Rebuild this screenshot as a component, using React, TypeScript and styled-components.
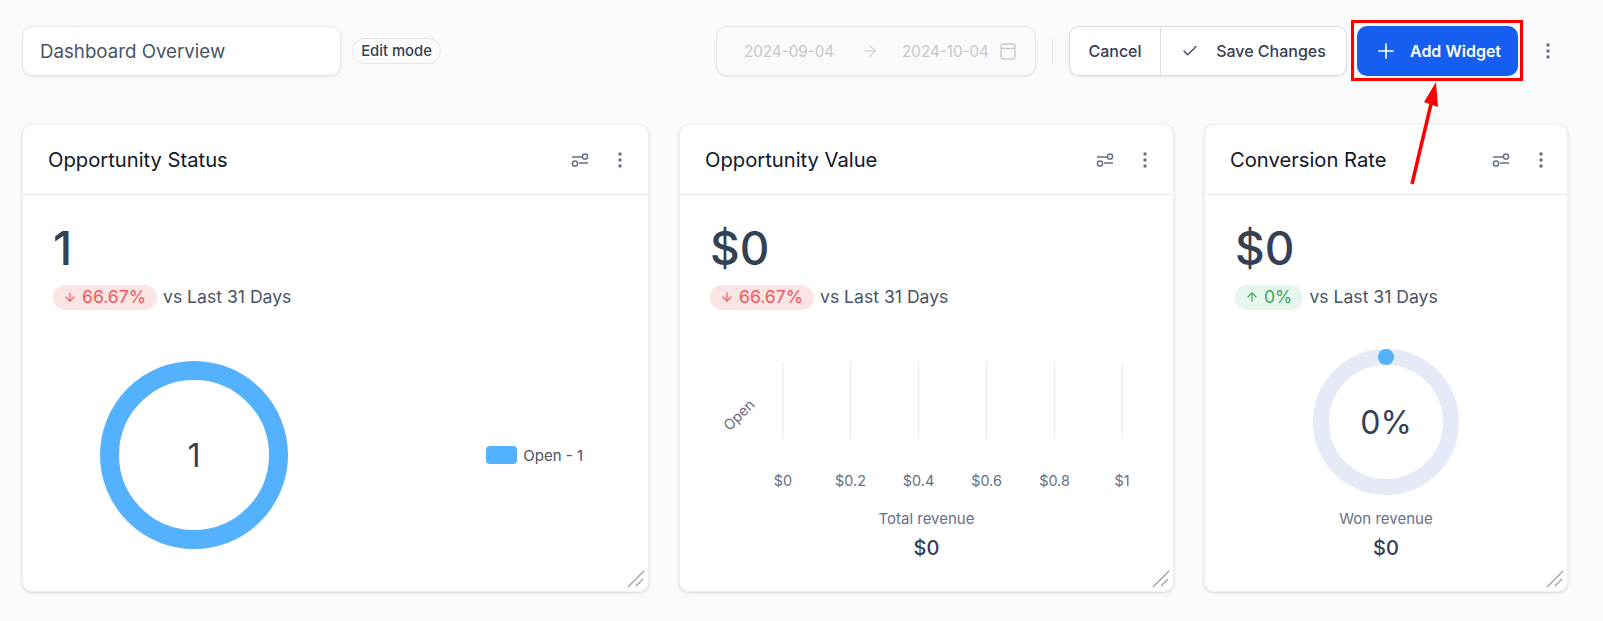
import React from 'react';
import styled, { createGlobalStyle } from 'styled-components';
import { ArrowDown, ArrowRight, ArrowUp, Check, Plus } from 'lucide-react';

const GlobalStyle = createGlobalStyle`
  html, body {
    margin: 0;
    background: #f9fafc;
    font-family: Inter, "Liberation Sans", sans-serif;
    overflow: hidden;
  }
  * { box-sizing: border-box; }
`;

const Page = styled.div`
  position: relative;
  width: 1603px;
  height: 621px;
  padding: 26px 35px 0 22px;
  background: #f9fafc;
`;

const Toolbar = styled.div`
  display: flex;
  align-items: center;
  height: 50px;
  margin-bottom: 48px;
`;

const TitleInput = styled.div`
  width: 319px;
  height: 50px;
  padding: 0 17px;
  display: flex;
  align-items: center;
  background: #fff;
  border: 1px solid #e4e7ec;
  border-radius: 10px;
  box-shadow: 0 1px 2px rgba(16, 24, 40, 0.08);
  font-size: 18.7px;
  color: #475467;
`;

const ModePill = styled.div`
  margin-left: 11px;
  height: 26px;
  width: 89px;
  display: flex;
  align-items: center;
  justify-content: center;
  background: #fcfcfd;
  border: 1px solid #e4e7ec;
  border-radius: 13px;
  font-size: 14.8px;
  font-weight: 500;
  color: #344054;
`;

const DateRange = styled.div`
  margin-left: auto;
  width: 320px;
  height: 50px;
  padding: 0 0 0 27px;
  display: flex;
  align-items: center;
  background: #f9fafb;
  border: 1px solid #e4e7ec;
  border-radius: 10px;
  box-shadow: 0 1px 2px rgba(16, 24, 40, 0.06);
  font-size: 15.2px;
  color: #c6c8cd;
`;

const DateArrow = styled.span`
  display: flex;
  margin: 0 23px 0 27px;
`;

const DateIcon = styled.span`
  display: flex;
  margin-left: 11px;
`;

const Separator = styled.div`
  width: 1px;
  height: 28px;
  margin: 0 16px;
  background: #e9ebef;
`;

const ButtonGroup = styled.div`
  display: flex;
  width: 278px;
  height: 50px;
  background: #fff;
  border: 1px solid #d9dde3;
  border-radius: 10px;
  box-shadow: 0 1px 2px rgba(16, 24, 40, 0.08);
  font-size: 16px;
  font-weight: 500;
  color: #344054;
`;

const GroupButton = styled.div<{ $width: number; $divider?: boolean }>`
  width: ${(p) => p.$width}px;
  display: flex;
  align-items: center;
  justify-content: center;
  gap: 17px;
  border-left: ${(p) => (p.$divider ? '1px solid #d9dde3' : 'none')};
`;

const AddButton = styled.div`
  margin-left: 10px;
  width: 161px;
  height: 50px;
  display: flex;
  align-items: center;
  justify-content: center;
  gap: 12px;
  background: #155eef;
  border-radius: 10px;
  color: #fff;
  font-size: 16px;
  font-weight: 600;
`;

const MoreSlot = styled.div`
  margin-left: 20px;
  margin-right: 10px;
  width: 20px;
  display: flex;
  justify-content: center;
  color: #667085;
`;

const Cards = styled.div`
  display: grid;
  grid-template-columns: 627px 495px 364px;
  gap: 30px;
`;

const Card = styled.section`
  position: relative;
  height: 468px;
  background: #fff;
  border: 1px solid #eef0f4;
  border-radius: 10px;
  box-shadow: 0 1px 3px rgba(16, 24, 40, 0.16);
`;

const CardHeader = styled.header<{ $inset: number }>`
  height: 70px;
  padding: 0 ${(p) => p.$inset}px 0 25px;
  display: flex;
  align-items: center;
  border-bottom: 1px solid #e9ebef;
`;

const CardTitle = styled.h2`
  margin: 0 auto 0 0;
  font-size: 20.2px;
  font-weight: 400;
  color: #101828;
`;

const IconSlot = styled.div<{ $gap?: number }>`
  display: flex;
  margin-left: ${(p) => p.$gap ?? 0}px;
  color: #667085;
`;

const CardBody = styled.div`
  padding: 27px 30px 0;
`;

const Stat = styled.div`
  font-size: 46px;
  line-height: 52px;
  font-weight: 500;
  color: #344054;
`;

const DeltaRow = styled.div`
  margin-top: 11px;
  height: 25px;
  display: flex;
  align-items: center;
  gap: 6px;
  font-size: 17.6px;
  color: #475467;
`;

const DeltaNote = styled.span`
  margin-bottom: 3px;
`;

const DeltaBadge = styled.span<{ $tone: 'up' | 'down' }>`
  height: 25px;
  padding: 0 11px 2px 10px;
  display: flex;
  align-items: center;
  gap: 5px;
  border-radius: 13px;
  background: ${(p) => (p.$tone === 'up' ? '#e7f6ec' : '#fbe4e4')};
  color: ${(p) => (p.$tone === 'up' ? '#3fa35c' : '#f5595c')};
`;

const DonutRow = styled.div`
  margin: 51px 0 0 47px;
  display: flex;
  align-items: center;
  justify-content: space-between;
  padding-right: 35px;
`;

const Ring = styled.div`
  position: relative;
  display: grid;
  place-items: center;
`;

const RingLabel = styled.div`
  position: absolute;
  font-size: 32px;
  color: #344054;
`;

const Legend = styled.div`
  display: flex;
  align-items: center;
  gap: 6px;
  font-size: 15px;
  color: #475467;
`;

const Swatch = styled.span`
  width: 31px;
  height: 18px;
  border-radius: 4px;
  background: #53b1fd;
`;

const ChartColumn = styled.div`
  margin-top: 39px;
  display: flex;
  flex-direction: column;
  align-items: center;
`;

const Caption = styled.div`
  margin-top: 14px;
  font-size: 15px;
  line-height: 20px;
  color: #667085;
`;

const CaptionValue = styled.div`
  margin-top: 5px;
  font-size: 20px;
  line-height: 28px;
  font-weight: 500;
  color: #344054;
`;

const ResizeGrip = styled.svg`
  position: absolute;
  right: 3px;
  bottom: 3px;
`;

const Callout = styled.div`
  position: absolute;
  left: 1351px;
  top: 20px;
  width: 172px;
  height: 61px;
  border: 3px solid #ff0000;
  pointer-events: none;
`;

const CalloutArrow = styled.svg`
  position: absolute;
  left: 1405px;
  top: 78px;
  pointer-events: none;
`;

const AxisLabel = styled.text`
  font-size: 14.4px;
  fill: #667085;
`;

const Dots = () => (
  <svg width="20" height="20" viewBox="0 0 20 20" fill="currentColor">
    <circle cx="10" cy="4" r="1.7" />
    <circle cx="10" cy="10" r="1.7" />
    <circle cx="10" cy="16" r="1.7" />
  </svg>
);

const Filters = () => (
  <svg width="18" height="14" viewBox="0 0 18 14" fill="none" stroke="currentColor" strokeWidth="1.5">
    <path d="M1 4h10M8 10h9" />
    <circle cx="14" cy="3.5" r="2.6" />
    <circle cx="4" cy="10.5" r="2.6" />
  </svg>
);

const CalendarIcon = () => (
  <svg width="16" height="17" viewBox="0 0 16 17" fill="none" stroke="currentColor" strokeWidth="1.3">
    <rect x="1" y="1" width="14" height="15" rx="2.5" />
    <path d="M1 5.5h14" />
  </svg>
);

const Grip = () => (
  <ResizeGrip width="18" height="18" viewBox="0 0 18 18" stroke="#9b9bb0" strokeWidth="1.2">
    <path d="M1 17L17 1M9 16L16 9" />
  </ResizeGrip>
);

type CardShellProps = { title: string; inset?: number; children: React.ReactNode };

function CardShell({ title, inset = 18, children }: CardShellProps) {
  return (
    <Card>
      <CardHeader $inset={inset}>
        <CardTitle>{title}</CardTitle>
        <IconSlot><Filters /></IconSlot>
        <IconSlot $gap={21}><Dots /></IconSlot>
      </CardHeader>
      <CardBody>{children}</CardBody>
      <Grip />
    </Card>
  );
}

type DeltaProps = { value: string; tone: 'up' | 'down' };

function Delta({ value, tone }: DeltaProps) {
  const Icon = tone === 'up' ? ArrowUp : ArrowDown;
  return (
    <DeltaRow>
      <DeltaBadge $tone={tone}>
        <Icon size={14} />
        {value}
      </DeltaBadge>
      <DeltaNote>vs Last 31 Days</DeltaNote>
    </DeltaRow>
  );
}

const ticks = [
  { label: '$0', x: 73 },
  { label: '$0.2', x: 140.5 },
  { label: '$0.4', x: 208.5 },
  { label: '$0.6', x: 276.5 },
  { label: '$0.8', x: 344.5 },
  { label: '$1', x: 412 },
];

function BarChart() {
  return (
    <svg width="433" height="146" viewBox="0 0 433 146">
      {ticks.map((t) => (
        <React.Fragment key={t.label}>
          <line x1={t.x} x2={t.x} y1="13" y2="90" stroke="#e1e9f3" />
          <AxisLabel x={t.x} y="136.5" textAnchor="middle">{t.label}</AxisLabel>
        </React.Fragment>
      ))}
      <AxisLabel x="29" y="71" textAnchor="middle" transform="rotate(-45 29 66)">Open</AxisLabel>
    </svg>
  );
}

export default function App() {
  return (
    <Page>
      <GlobalStyle />
      <Toolbar>
        <TitleInput>Dashboard Overview</TitleInput>
        <ModePill>Edit mode</ModePill>
        <DateRange>
          <span>2024-09-04</span>
          <DateArrow><ArrowRight size={18} strokeWidth={1.4} /></DateArrow>
          <span>2024-10-04</span>
          <DateIcon><CalendarIcon /></DateIcon>
        </DateRange>
        <Separator />
        <ButtonGroup>
          <GroupButton $width={90}>Cancel</GroupButton>
          <GroupButton $width={186} $divider>
            <Check size={18} strokeWidth={1.6} />
            Save Changes
          </GroupButton>
        </ButtonGroup>
        <AddButton>
          <Plus size={24} strokeWidth={1.7} />
          Add Widget
        </AddButton>
        <MoreSlot><Dots /></MoreSlot>
      </Toolbar>

      <Cards>
        <CardShell title="Opportunity Status">
          <Stat>1</Stat>
          <Delta value="66.67%" tone="down" />
          <DonutRow>
            <Ring>
              <svg width="188" height="188" viewBox="0 0 188 188" fill="none">
                <circle cx="94" cy="94" r="84.5" stroke="#53b1fd" strokeWidth="19" />
              </svg>
              <RingLabel>1</RingLabel>
            </Ring>
            <Legend>
              <Swatch />
              Open - 1
            </Legend>
          </DonutRow>
        </CardShell>

        <CardShell title="Opportunity Value">
          <Stat>$0</Stat>
          <Delta value="66.67%" tone="down" />
          <ChartColumn>
            <BarChart />
            <Caption>Total revenue</Caption>
            <CaptionValue>$0</CaptionValue>
          </ChartColumn>
        </CardShell>

        <CardShell title="Conversion Rate" inset={16}>
          <Stat>$0</Stat>
          <Delta value="0%" tone="up" />
          <ChartColumn>
            <Ring>
              <svg width="146" height="146" viewBox="0 0 146 146" fill="none">
                <circle cx="73" cy="73" r="65" stroke="#e6eaf6" strokeWidth="16" />
                <circle cx="73" cy="8" r="8" fill="#53b1fd" />
              </svg>
              <RingLabel>0%</RingLabel>
            </Ring>
            <Caption>Won revenue</Caption>
            <CaptionValue>$0</CaptionValue>
          </ChartColumn>
        </CardShell>
      </Cards>

      <Callout />
      <CalloutArrow width="40" height="110" viewBox="0 0 40 110">
        <path d="M31 4L19 24L33 29Z" fill="#ff0000" />
        <path d="M26 26L7 106" stroke="#ff0000" strokeWidth="3.5" />
      </CalloutArrow>
    </Page>
  );
}
